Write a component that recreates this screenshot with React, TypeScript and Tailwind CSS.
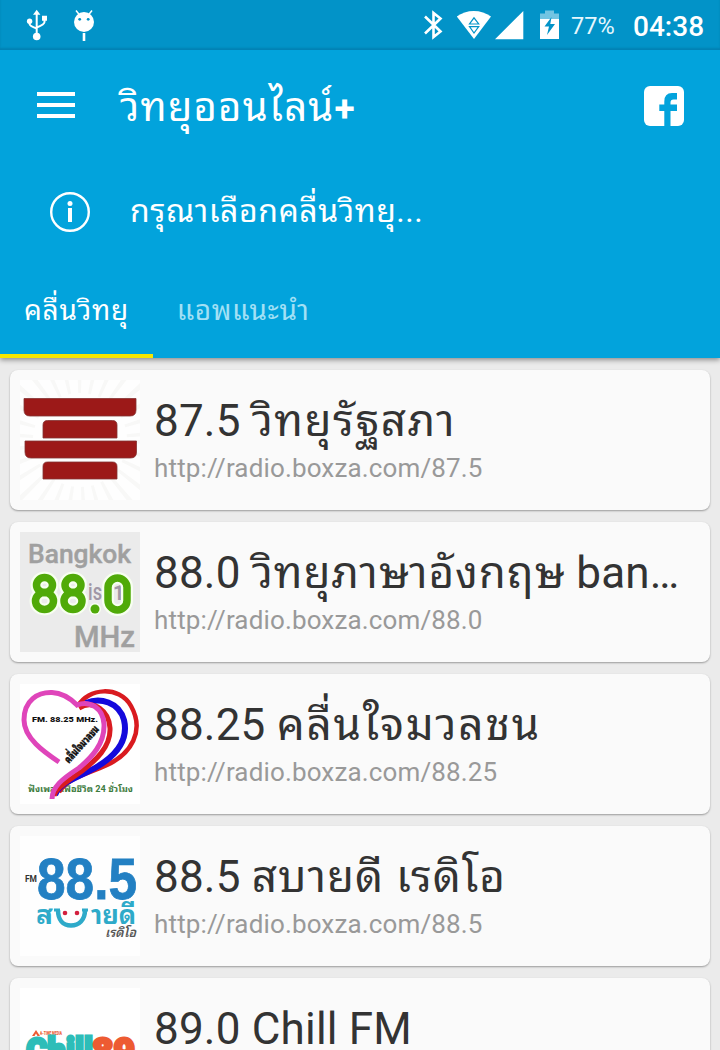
interface Station {
    freq: string;
    title: string;
    tracking?: string;
    suffix?: string;
    url: string;
    logo: React.ReactNode;
}

function StatusBar() {
    return (
        <div className="flex h-[50px] items-center bg-[#0293c8] text-white shadow-[inset_0_-2px_2px_rgba(0,80,120,0.25)]">
            {/* usb */}
            <svg className="ml-[25px] h-[34px] w-6" viewBox="25 8 24 34" fill="none" stroke="white" strokeWidth="2">
                <path d="M36.7 13v23M29.600 21v3q0 2 7.100 4.500M44.500 19v3q0 2.500-7.800 5.500" />
                <path d="M36.700 9.700l-3.700 5h7.400zM42 15.700h5v5h-5z" fill="white" stroke="none" />
                <circle cx="29.600" cy="21.200" r="2.700" fill="white" stroke="none" />
                <circle cx="36.700" cy="36.500" r="3.800" fill="white" stroke="none" />
            </svg>
            {/* debug bug */}
            <svg className="ml-[23px] h-[34px] w-6" viewBox="72 8 24 34">
                <path d="M76 10.500l4 5M92 10.500l-4 5" stroke="white" strokeWidth="1.500" />
                <circle cx="84" cy="22" r="10" fill="white" />
                <circle cx="79.700" cy="19.300" r="1.400" fill="#0293c8" />
                <circle cx="88.200" cy="19.300" r="1.400" fill="#0293c8" />
                <path d="M84 33v8" stroke="white" strokeWidth="2.600" />
            </svg>
            {/* bluetooth */}
            <svg className="ml-auto h-[34px] w-6" viewBox="421 8 24 34" fill="none" stroke="white" strokeWidth="2.600">
                <path d="M425 16.500l15.500 15-7 5.500V13l7 5.500L425 33.500" />
            </svg>
            {/* wifi with activity arrows */}
            <svg className="ml-[11px] h-[34px] w-9" viewBox="456 8 36 34">
                <path d="M456.800 16.500C466 9 481.500 9 491 16.500L474 39z" fill="white" />
                <path d="M469.500 24h9.200L474 17.800z M469.500 26.700h9.200L474 33z" fill="none" stroke="#0293c8" strokeWidth="1.200" />
            </svg>
            <svg className="ml-[3px] h-[34px] w-[29px]" viewBox="495 8 29 34">
                <path d="M495 39.300h28.300V11z" fill="white" />
            </svg>
            {/* charging battery */}
            <svg className="ml-4 h-[34px] w-[19px]" viewBox="540 8 19 34">
                <path d="M540 13.500h5V10.500h9v3h5V19h-19z" fill="#72c4e2" />
                <path d="M540 19h19v20h-19z" fill="white" />
                <path d="M551.500 17l-7 9.500h4.500L547 35l8-11h-4.700z" fill="#0293c8" />
            </svg>
            <span className="ml-[12px] w-[44px] pt-[3px] text-[23.500px] leading-none whitespace-nowrap text-[#e6f7fd]">77%</span>
            <span className="mr-[14px] ml-[18px] w-[73px] pt-[3px] text-[28px] leading-none font-medium whitespace-nowrap">04:38</span>
        </div>
    );
}

function Header() {
    return (
        <header className="relative bg-[#02a3dc] text-white shadow-[0_2px_5px_rgba(0,0,0,0.4)]">
            <StatusBar />
            <div className="flex h-28 items-center pr-9 pl-[37px]">
                <div className="mb-0.5 flex w-[38px] flex-col gap-[7px]">
                    <div className="h-1 bg-white" />
                    <div className="h-1 bg-white" />
                    <div className="h-1 bg-white" />
                </div>
                <h1 className="ml-[45px] pt-[5px] text-[40px] leading-[56px] tracking-[1.2px] whitespace-nowrap">
                    วิทยุออนไลน์<span className="text-[37px] font-bold">+</span>
                </h1>
                <svg className="ml-auto h-10 w-10" viewBox="0 0 40 40">
                    <rect width="40" height="40" rx="6" fill="white" />
                    <path d="M20.300 40V25H15.300V18.500H20.300V15.500Q20.300 7 28 7H33V13.500H29.500Q26.500 13.500 26.500 16.500V18.500H33V25H26.500V40z" fill="#02a3dc" />
                </svg>
            </div>
            <div className="flex h-[100px] items-center pl-[50px]">
                <svg className="h-10 w-10" viewBox="0 0 40 40">
                    <circle cx="20" cy="20" r="18.800" fill="none" stroke="white" strokeWidth="2.400" />
                    <circle cx="20" cy="11.500" r="2.500" fill="white" />
                    <path d="M18 16h4v14h-4z" fill="white" />
                </svg>
                <p className="ml-10 pb-[3px] text-[32px] leading-10 tracking-[0.55px] whitespace-nowrap">กรุณาเลือกคลื่นวิทยุ...</p>
            </div>
            <nav className="flex h-24 text-[28px] whitespace-nowrap">
                <div className="flex w-[153px] items-center justify-center border-b-4 border-[#f6e600] pt-1.5 tracking-[0.8px]">คลื่นวิทยุ</div>
                <div className="flex w-[180px] items-center justify-center border-b-4 border-transparent pt-1.5 tracking-[0.6px] text-[#a3e0f5]">แอพแนะนำ</div>
            </nav>
        </header>
    );
}

function ParliamentLogo() {
    return (
        <svg className="size-full" viewBox="0 0 120 120">
            <rect width="120" height="120" fill="#fefefe" />
            <circle cx="60" cy="60" r="66" fill="none" stroke="#f8f8f7" strokeWidth="38" strokeDasharray="4 10" />
            <g fill="#9c1918" stroke="#843334" strokeWidth="0.800">
                <path d="M4 18.500h112V30q0 6-6 6H10q-6 0-6-6z" />
                <path d="M23 58V45q0-4.500 4.500-4.500h65q4.500 0 4.500 4.500v13z" />
                <path d="M5 61h111.500v11q0 6-6 6H11q-6 0-6-6z" />
                <path d="M23 99V86.500q0-4.500 4.500-4.500h65q4.500 0 4.500 4.500V99z" />
            </g>
        </svg>
    );
}

function BangkokLogo() {
    return (
        <svg className="size-full" viewBox="0 0 120 120" fontFamily="Roboto, sans-serif">
            <rect width="120" height="120" fill="#ebebeb" />
            <text x="8" y="31" fontSize="26" fontWeight="500" fill="#a0a0a0" stroke="#a0a0a0" strokeWidth="0.400" textLength="103" lengthAdjust="spacingAndGlyphs">Bangkok</text>
            <text x="68" y="68" fontSize="23" fill="#a097a6" fontWeight="500" textLength="14" lengthAdjust="spacingAndGlyphs">is</text>
            <text x="93" y="68" fontSize="20" fill="#a097a6" fontWeight="700">1</text>
            <g fill="none" stroke="#f7fff0" strokeWidth="12">
                <ellipse cx="24.500" cy="53" rx="8" ry="7.500" />
                <ellipse cx="24.500" cy="69" rx="9" ry="8.500" />
                <ellipse cx="53" cy="53" rx="8" ry="7.500" />
                <ellipse cx="53" cy="69" rx="9" ry="8.500" />
                <rect x="88" y="46" width="19" height="32" rx="9.500" />
            </g>
            <circle cx="75" cy="77" r="6" fill="#f7fff0" />
            <g fill="none" stroke="#50aa08" strokeWidth="7.500">
                <ellipse cx="24.500" cy="53" rx="8" ry="7.500" />
                <ellipse cx="24.500" cy="69" rx="9" ry="8.500" />
                <ellipse cx="53" cy="53" rx="8" ry="7.500" />
                <ellipse cx="53" cy="69" rx="9" ry="8.500" />
                <rect x="88" y="46" width="19" height="32" rx="9.500" />
            </g>
            <circle cx="75" cy="77" r="4.500" fill="#50aa08" />
            <text x="54" y="115" fontSize="30" fontWeight="500" fill="#a0a0a0" stroke="#a0a0a0" strokeWidth="0.400" textLength="61" lengthAdjust="spacingAndGlyphs">MHz</text>
        </svg>
    );
}

function HeartLogo() {
    return (
        <svg className="size-full" viewBox="0 0 120 120" fill="none">
            <rect width="120" height="120" fill="white" />
            <text x="8" y="108" fontSize="9" fontWeight="700" fill="#3e7c3e" textLength="105" lengthAdjust="spacingAndGlyphs">ฟังเพลงเพื่อชีวิต 24 ชั่วโมง</text>
            <path d="M58 22C68 4 99 1 111 22C125 47 111 70 87 81C62 92 48 94 39 108" stroke="#d91b20" strokeWidth="4.500" />
            <path d="M66 19C80 13 99 18 104 36C109 57 94 73 75 84C55 95 39 99 35 111" stroke="#1409dc" strokeWidth="6" />
            <path d="M59 24C74 15 89 27 90 44C91 63 75 77 62 87C47 98 36 104 34 112" stroke="#d91b20" strokeWidth="5" />
            <path d="M39 78C24 68 4 54 4 36C4 16 18 8 32 8.500C44 9 52 16 57 21C70 16 83 24 84 40C85 60 71 74 59 84C42 95 32 103 32 115" stroke="#df45ba" strokeWidth="5" />
            <text x="12" y="38" fontSize="8" fontWeight="900" fill="#111" textLength="66" lengthAdjust="spacingAndGlyphs">FM. 88.25 MHz.</text>
            <text x="49" y="80" fontSize="11" fontWeight="900" fill="#111" stroke="#111" strokeWidth="0.300" transform="rotate(-48 49 80)" textLength="46" lengthAdjust="spacingAndGlyphs">คลื่นใจมวลชน</text>
        </svg>
    );
}

function SabaideeLogo() {
    return (
        <svg className="size-full" viewBox="0 0 120 120">
            <rect width="120" height="120" fill="#fefefe" />
            <text x="5" y="46" fontSize="8.500" fontWeight="700" fill="#333" textLength="12" lengthAdjust="spacingAndGlyphs">FM</text>
            <text x="17" y="62.500" fontFamily="Liberation Sans, sans-serif" fontSize="58" fontWeight="700" fill="#2380c3" stroke="#2380c3" strokeWidth="0.800" textLength="100" lengthAdjust="spacingAndGlyphs">88.5</text>
            <text x="16" y="88" fontSize="26" fontWeight="700" fill="#2eaac9" textLength="17" lengthAdjust="spacingAndGlyphs">ส</text>
            <path d="M38 74C38 84 43 89.500 51 89.500S65 84 65 74" fill="none" stroke="#2eaac9" strokeWidth="4.500" />
            <path d="M34 74h6M62 74h6" stroke="#2eaac9" strokeWidth="3" />
            <circle cx="45" cy="77" r="2.300" fill="#d3203e" />
            <circle cx="57" cy="77" r="2.300" fill="#d3203e" />
            <text x="71" y="88" fontSize="26" fontWeight="700" fill="#2eaac9" textLength="45" lengthAdjust="spacingAndGlyphs">ายดี</text>
            <text x="85" y="101" fontSize="13" fontStyle="italic" fontWeight="600" fill="#555" textLength="31" lengthAdjust="spacingAndGlyphs">เรดิโอ</text>
        </svg>
    );
}

function ChillLogo() {
    return (
        <svg className="size-full" viewBox="0 0 120 120" fontWeight="900">
            <rect width="120" height="120" fill="white" />
            <path d="M12 48l4-6 4 6h-2.500l-1.500-2.500-1.500 2.500z" fill="#ed5b32" />
            <text x="20" y="47" fontSize="5" fill="#ed5b32" textLength="22" lengthAdjust="spacingAndGlyphs">A-TIME MEDIA</text>
            <text x="6" y="76" fontSize="36" fill="#2dbdb8" stroke="#2dbdb8" strokeWidth="3" textLength="67" lengthAdjust="spacingAndGlyphs">Chill</text>
            <text x="72" y="76" fontSize="37" fill="#ed5b32" stroke="#ed5b32" strokeWidth="3" textLength="43" lengthAdjust="spacingAndGlyphs">89</text>
        </svg>
    );
}

const stations: Station[] = [
    { freq: "87.5", title: "วิทยุรัฐสภา", tracking: "tracking-[1.45px]", url: "http://radio.boxza.com/87.5", logo: <ParliamentLogo /> },
    { freq: "88.0", title: "วิทยุภาษาอังกฤษ", tracking: "tracking-[0.9px]", suffix: "ban…", url: "http://radio.boxza.com/88.0", logo: <BangkokLogo /> },
    { freq: "88.25", title: "คลื่นใจมวลชน", tracking: "tracking-[1.8px]", url: "http://radio.boxza.com/88.25", logo: <HeartLogo /> },
    { freq: "88.5", title: "สบายดี เรดิโอ", tracking: "tracking-[1px]", url: "http://radio.boxza.com/88.5", logo: <SabaideeLogo /> },
    { freq: "89.0", title: "", suffix: "Chill FM", url: "http://radio.boxza.com/89.0", logo: <ChillLogo /> },
];

function StationCard({ freq, title, tracking, suffix, url, logo }: Station) {
    return (
        <li className="flex h-[140px] shrink-0 rounded-lg bg-[#fafafa] p-[10px] shadow-[0_1px_2px_rgba(0,0,0,0.35)]">
            <div className="size-[120px] shrink-0">{logo}</div>
            <div className="ml-[14px] pt-[11px] whitespace-nowrap">
                <h2 className="h-[61px] text-[44px] leading-[61px] tracking-[0.2px] text-[#333]">
                    {freq} {title && <span className={tracking}>{title}</span>}
                    {title && suffix ? " " : ""}
                    {suffix}
                </h2>
                <p className="text-[26px] leading-8 tracking-[0.15px] text-[#999]">{url}</p>
            </div>
        </li>
    );
}

export default function App() {
    return (
        <div className="flex h-[1050px] w-[720px] flex-col overflow-hidden bg-[#ebebeb] font-[Roboto,'Noto_Sans_Thai_Looped',sans-serif]">
            <Header />
            <ul className="flex flex-col gap-3 px-[10px] pt-3">
                {stations.map((station) => (
                    <StationCard key={station.url} {...station} />
                ))}
            </ul>
        </div>
    );
}
